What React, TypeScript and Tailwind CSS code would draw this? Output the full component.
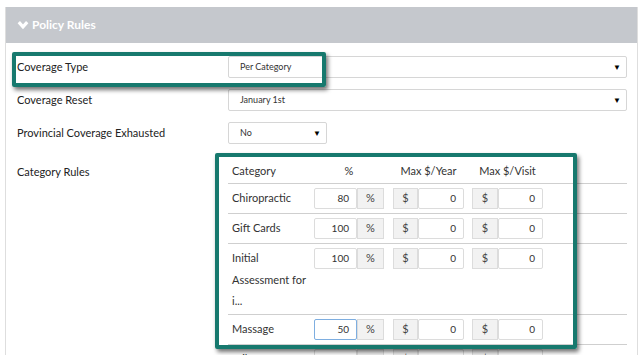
import React from "react";

interface CategoryRow {
  name: string[];
  pct: string;
  year: string;
  visit: string;
  focused?: boolean;
}

const rows: CategoryRow[] = [
  { name: ["Chiropractic"], pct: "80", year: "0", visit: "0" },
  { name: ["Gift Cards"], pct: "100", year: "0", visit: "0" },
  { name: ["Initial", "Assessment for", "i..."], pct: "100", year: "0", visit: "0" },
  { name: ["Massage"], pct: "50", year: "0", visit: "0", focused: true },
  { name: ["Mileage"], pct: "0", year: "0", visit: "0" },
];

function Select({ value, width }: { value: string; width: string }) {
  return (
    <div
      className={`${width} h-[22px] border border-[#d6d6d6] rounded-[2px] bg-white flex items-center justify-between pl-[11px] pr-[5px] text-[9px] text-[#333]`}
    >
      <span>{value}</span>
      <span className="text-[8px] text-black">▼</span>
    </div>
  );
}

function Addon({ children, w }: { children: React.ReactNode; w: string }) {
  return (
    <div
      className={`${w} h-[21px] bg-[#f2f2f2] border border-[#dcdcdc] flex items-center justify-center text-[11px] text-[#444]`}
    >
      {children}
    </div>
  );
}

function NumInput({ value, w, focused }: { value: string; w: string; focused?: boolean }) {
  return (
    <div
      className={`${w} h-[21px] bg-white border ${
        focused ? "border-[#7eaee0]" : "border-[#dcdcdc]"
      } rounded-[2px] flex items-center justify-end pr-[7px] text-[10px] text-[#333]`}
    >
      {value}
    </div>
  );
}

function FieldRow({ label, children }: { label: string; children: React.ReactNode }) {
  return (
    <div className="flex items-center h-[22px]">
      <div className="w-[211px] text-[11px] text-[#222]">{label}</div>
      {children}
    </div>
  );
}

export default function App() {
  return (
    <div className="relative w-[643px] h-[355px] overflow-hidden bg-white font-['Lato',sans-serif]">
      <div className="ml-[5px] mt-[7px] w-[633px] border border-[#dedede] border-t-0">
        {/* panel header */}
        <div className="h-[36px] bg-[#c5c8cd] flex items-center pl-[11px] gap-[3px] text-white text-[12px] font-bold">
          <svg width="12" height="10" viewBox="0 0 12 10">
            <polyline points="1.8,2.2 6,6.8 10.2,2.2" fill="none" stroke="white" strokeWidth="3.2" />
          </svg>
          Policy Rules
        </div>

        <div className="pl-[11px] pr-[10px] pt-[13px] flex flex-col gap-[11px]">
          <FieldRow label="Coverage Type">
            <Select value="Per Category" width="flex-1" />
          </FieldRow>
          <FieldRow label="Coverage Reset">
            <Select value="January 1st" width="flex-1" />
          </FieldRow>
          <FieldRow label="Provincial Coverage Exhausted">
            <Select value="No" width="w-[99px]" />
          </FieldRow>

          <div className="flex mt-[5px]">
            <div className="w-[211px] h-[24px] flex items-center text-[11px] text-[#222]">Category Rules</div>
            <div className="flex-1">
              <div className="flex h-[24px] items-center border-b border-[#cfcfcf] text-[11px] text-[#333]">
                <div className="w-[86px] pl-[4px]">Category</div>
                <div className="w-[79px]">
                  <div className="w-[70px] text-center">%</div>
                </div>
                <div className="w-[79px]">
                  <div className="w-[71px] text-center">Max $/Year</div>
                </div>
                <div className="w-[79px]">
                  <div className="w-[71px] text-center">Max $/Visit</div>
                </div>
              </div>
              {rows.map((r) => (
                <div key={r.name.join(" ")} className="flex items-start border-b border-[#cfcfcf] min-h-[30px]">
                  <div className="w-[86px] pl-[4px] pt-[3px] pb-[2px] text-[11px] leading-[21.5px] text-[#333]">
                    {r.name.map((n) => (
                      <div key={n}>{n}</div>
                    ))}
                  </div>
                  <div className="w-[79px] pt-[4px] flex">
                    <NumInput value={r.pct} w="w-[43px]" focused={r.focused} />
                    <Addon w="w-[27px]">%</Addon>
                  </div>
                  <div className="w-[79px] pt-[4px] flex">
                    <Addon w="w-[25px]">$</Addon>
                    <NumInput value={r.year} w="w-[46px]" />
                  </div>
                  <div className="w-[79px] pt-[4px] flex">
                    <Addon w="w-[26px]">$</Addon>
                    <NumInput value={r.visit} w="w-[45px]" />
                  </div>
                </div>
              ))}
            </div>
          </div>
        </div>
      </div>

      {/* annotation highlights */}
      <div className="absolute left-[12px] top-[52px] w-[314px] h-[35px] border-[4px] border-[#17796e] rounded-[2px] shadow-[2px_3px_4px_rgba(0,0,0,0.55)]" />
      <div className="absolute left-[215px] top-[153px] w-[362px] h-[196px] border-[4px] border-[#17796e] rounded-[2px] shadow-[2px_3px_4px_rgba(0,0,0,0.55)]" />
    </div>
  );
}
